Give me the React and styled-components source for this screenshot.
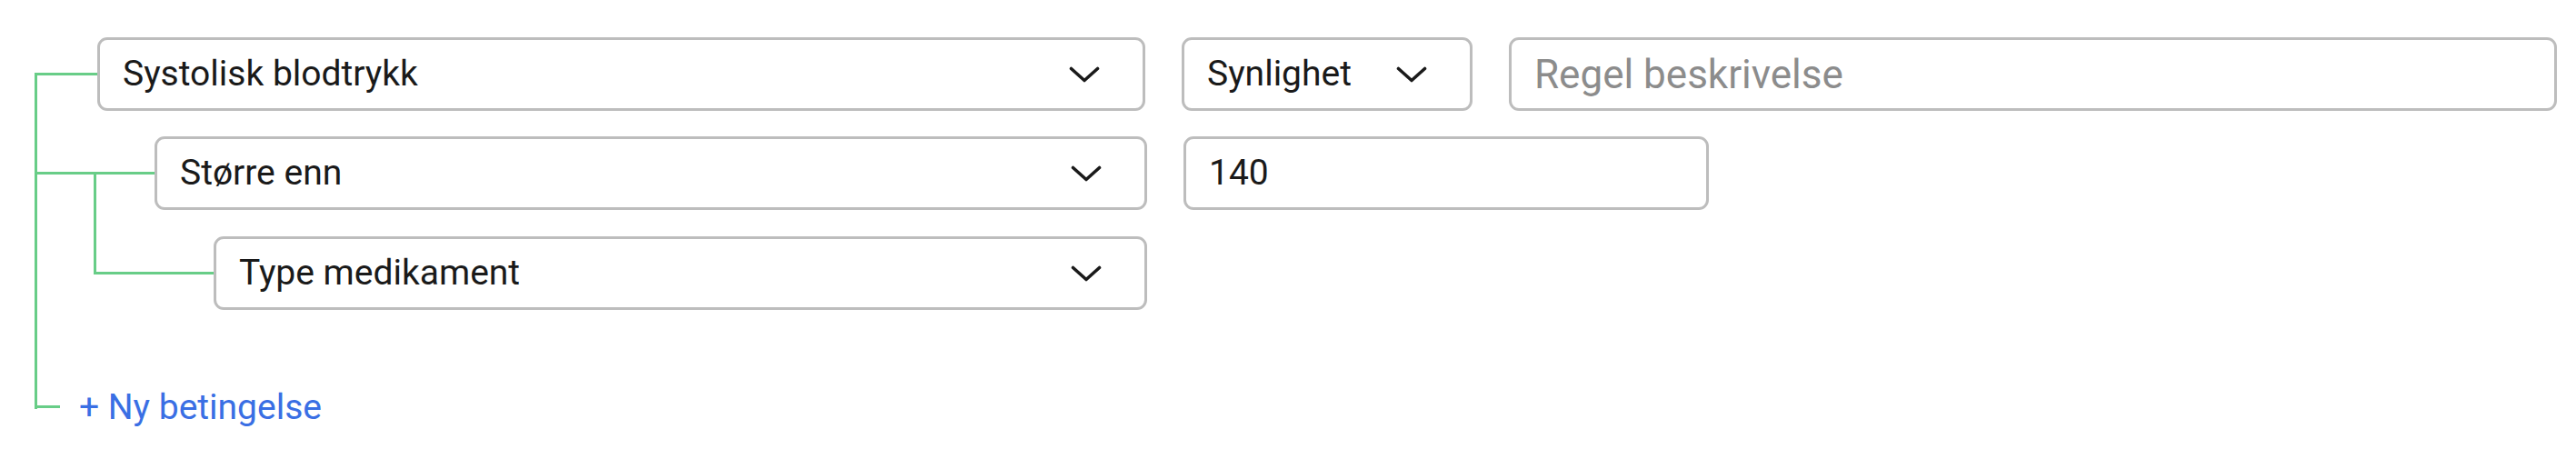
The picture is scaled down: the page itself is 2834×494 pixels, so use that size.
import React from "react";
import styled, { createGlobalStyle } from "styled-components";

const GlobalStyle = createGlobalStyle`
  html, body {
    margin: 0;
    padding: 0;
    background: #ffffff;
  }
  body {
    font-family: Roboto, "Liberation Sans", sans-serif;
  }
`;

const LINE = "#68cd87";

const Page = styled.div`
  padding: 41px 0 0 38px;
  color: #1a1a1a;
`;

// vertical connector of a group; top/bottom say where it starts and stops
const Rail = styled.ul`
  list-style: none;
  margin: 0;
  padding: 0;
  position: relative;
  margin-left: ${(props) => props.$offset || 0}px;

  &::before {
    content: "";
    position: absolute;
    left: 0;
    width: 3px;
    top: ${(props) => props.$top}px;
    bottom: ${(props) => props.$bottom}px;
    background: ${LINE};
  }
`;

const Item = styled.li`
  padding-top: ${(props) => props.$gap || 0}px;
`;

const Row = styled.div`
  position: relative;
  display: flex;
  align-items: center;
  gap: 40px;
  padding-left: ${(props) => props.$indent}px;

  &::before {
    content: "";
    position: absolute;
    left: 0;
    top: calc(50% - 2px);
    width: ${(props) => props.$reach || props.$indent}px;
    height: 3px;
    background: ${LINE};
  }
`;

const Field = styled.div`
  box-sizing: border-box;
  width: ${(props) => props.$width}px;
  height: 81px;
  border: 3px solid #bdbdbd;
  border-radius: 11px;
  background: #fff;
  display: flex;
  align-items: center;
  justify-content: space-between;
  padding: 0 47px 0 25px;
  font-size: ${(props) => (props.$placeholder ? 44 : 39)}px;
  line-height: 1;
  color: ${(props) => (props.$placeholder ? "#8c8c8c" : "#1a1a1a")};
`;

const Label = styled.span`
  white-space: nowrap;
`;

const Chevron = styled.svg`
  width: 34px;
  height: 18px;
  flex: none;
`;

const AddLink = styled.a`
  font-size: 39px;
  line-height: 46px;
  color: #3a6fe4;
  text-decoration: none;
  cursor: pointer;
`;

function Caret() {
  return (
    <Chevron viewBox="0 0 34 18">
      <polyline
        points="2.5,2.5 17,15.5 31.5,2.5"
        fill="none"
        stroke="#1a1a1a"
        strokeWidth="3.6"
        strokeLinecap="round"
        strokeLinejoin="round"
      />
    </Chevron>
  );
}

function Select({ width, children }) {
  return (
    <Field $width={width}>
      <Label>{children}</Label>
      <Caret />
    </Field>
  );
}

export default function App() {
  return (
    <>
      <GlobalStyle />
      <Page>
        <Rail $top={39} $bottom={21}>
          <Item>
            <Row $indent={69}>
              <Select width={1153}>Systolisk blodtrykk</Select>
              <Select width={320}>Synlighet</Select>
              <Field $width={1153} $placeholder>
                <Label>Regel beskrivelse</Label>
              </Field>
            </Row>
          </Item>
          <Item $gap={28}>
            <Row $indent={132}>
              <Select width={1092}>Større enn</Select>
              <Field $width={578}>
                <Label>140</Label>
              </Field>
            </Row>
            <Rail $offset={65} $top={-41} $bottom={39}>
              <Item $gap={29}>
                <Row $indent={132}>
                  <Select width={1027}>Type medikament</Select>
                </Row>
              </Item>
            </Rail>
          </Item>
          <Item $gap={84}>
            <Row $indent={49} $reach={28}>
              <AddLink>+ Ny betingelse</AddLink>
            </Row>
          </Item>
        </Rail>
      </Page>
    </>
  );
}
